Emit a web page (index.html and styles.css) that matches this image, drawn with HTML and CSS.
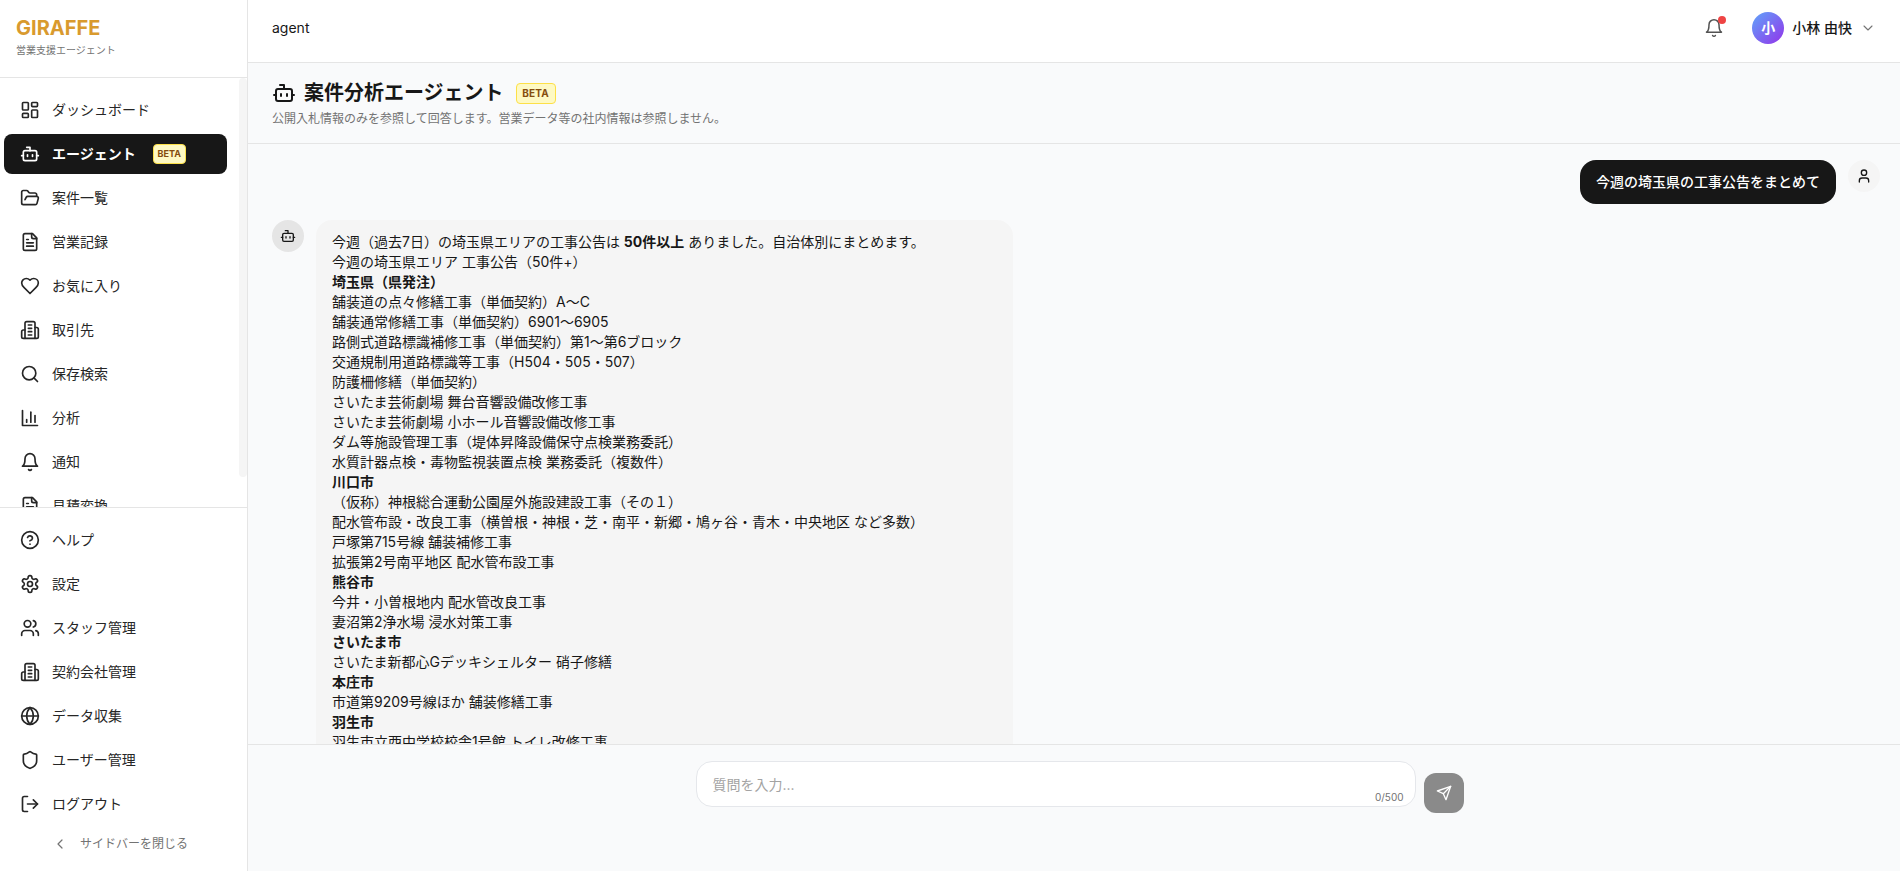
FILE: index.html
```html
<!DOCTYPE html>
<html lang="ja">
<head>
<meta charset="utf-8">
<title>agent</title>
<link rel="stylesheet" href="styles.css">
</head>
<body>
<svg class="sprite" aria-hidden="true">
  <symbol id="i-dash" viewBox="0 0 24 24"><rect width="7" height="9" x="3" y="3" rx="1"/><rect width="7" height="5" x="14" y="3" rx="1"/><rect width="7" height="9" x="14" y="12" rx="1"/><rect width="7" height="5" x="3" y="16" rx="1"/></symbol>
  <symbol id="i-bot" viewBox="0 0 24 24"><path d="M12 8V4H8"/><rect width="16" height="12" x="4" y="8" rx="2"/><path d="M2 14h2"/><path d="M20 14h2"/><path d="M15 13v2"/><path d="M9 13v2"/></symbol>
  <symbol id="i-folder" viewBox="0 0 24 24"><path d="m6 14 1.5-2.9A2 2 0 0 1 9.24 10H20a2 2 0 0 1 1.94 2.5l-1.54 6a2 2 0 0 1-1.95 1.5H4a2 2 0 0 1-2-2V5a2 2 0 0 1 2-2h3.9a2 2 0 0 1 1.69.9l.81 1.2a2 2 0 0 0 1.67.9H18a2 2 0 0 1 2 2v2"/></symbol>
  <symbol id="i-file" viewBox="0 0 24 24"><path d="M15 2H6a2 2 0 0 0-2 2v16a2 2 0 0 0 2 2h12a2 2 0 0 0 2-2V7Z"/><path d="M14 2v4a2 2 0 0 0 2 2h4"/><path d="M10 9H8"/><path d="M16 13H8"/><path d="M16 17H8"/></symbol>
  <symbol id="i-heart" viewBox="0 0 24 24"><path d="M19 14c1.49-1.46 3-3.21 3-5.5A5.5 5.5 0 0 0 16.5 3c-1.76 0-3 .5-4.5 2-1.5-1.5-2.74-2-4.5-2A5.5 5.5 0 0 0 2 8.5c0 2.3 1.5 4.05 3 5.5l7 7Z"/></symbol>
  <symbol id="i-building" viewBox="0 0 24 24"><path d="M6 22V4a2 2 0 0 1 2-2h8a2 2 0 0 1 2 2v18Z"/><path d="M6 12H4a2 2 0 0 0-2 2v6a2 2 0 0 0 2 2h2"/><path d="M18 9h2a2 2 0 0 1 2 2v9a2 2 0 0 1-2 2h-2"/><path d="M10 6h4"/><path d="M10 10h4"/><path d="M10 14h4"/><path d="M10 18h4"/></symbol>
  <symbol id="i-search" viewBox="0 0 24 24"><circle cx="11" cy="11" r="8"/><path d="m21 21-4.3-4.3"/></symbol>
  <symbol id="i-chart" viewBox="0 0 24 24"><path d="M3 3v18h18"/><path d="M18 17V9"/><path d="M13 17V5"/><path d="M8 17v-3"/></symbol>
  <symbol id="i-bell" viewBox="0 0 24 24"><path d="M6 8a6 6 0 0 1 12 0c0 7 3 9 3 9H3s3-2 3-9"/><path d="M10.3 21a1.94 1.94 0 0 0 3.4 0"/></symbol>
  <symbol id="i-help" viewBox="0 0 24 24"><circle cx="12" cy="12" r="10"/><path d="M9.09 9a3 3 0 0 1 5.83 1c0 2-3 3-3 3"/><path d="M12 17h.01"/></symbol>
  <symbol id="i-gear" viewBox="0 0 24 24"><path d="M12.22 2h-.44a2 2 0 0 0-2 2v.18a2 2 0 0 1-1 1.73l-.43.25a2 2 0 0 1-2 0l-.15-.08a2 2 0 0 0-2.73.73l-.22.38a2 2 0 0 0 .73 2.73l.15.1a2 2 0 0 1 1 1.72v.51a2 2 0 0 1-1 1.74l-.15.09a2 2 0 0 0-.73 2.73l.22.38a2 2 0 0 0 2.73.73l.15-.08a2 2 0 0 1 2 0l.43.25a2 2 0 0 1 1 1.73V20a2 2 0 0 0 2 2h.44a2 2 0 0 0 2-2v-.18a2 2 0 0 1 1-1.73l.43-.25a2 2 0 0 1 2 0l.15.08a2 2 0 0 0 2.73-.73l.22-.39a2 2 0 0 0-.73-2.73l-.15-.08a2 2 0 0 1-1-1.74v-.5a2 2 0 0 1 1-1.74l.15-.09a2 2 0 0 0 .73-2.73l-.22-.38a2 2 0 0 0-2.73-.73l-.15.08a2 2 0 0 1-2 0l-.43-.25a2 2 0 0 1-1-1.73V4a2 2 0 0 0-2-2z"/><circle cx="12" cy="12" r="3"/></symbol>
  <symbol id="i-users" viewBox="0 0 24 24"><path d="M16 21v-2a4 4 0 0 0-4-4H6a4 4 0 0 0-4 4v2"/><circle cx="9" cy="7" r="4"/><path d="M22 21v-2a4 4 0 0 0-3-3.87"/><path d="M16 3.13a4 4 0 0 1 0 7.75"/></symbol>
  <symbol id="i-globe" viewBox="0 0 24 24"><circle cx="12" cy="12" r="10"/><path d="M12 2a14.5 14.5 0 0 0 0 20 14.5 14.5 0 0 0 0-20"/><path d="M2 12h20"/></symbol>
  <symbol id="i-shield" viewBox="0 0 24 24"><path d="M20 13c0 5-3.5 7.5-7.66 8.95a1 1 0 0 1-.67-.01C7.5 20.5 4 18 4 13V6a1 1 0 0 1 1-1c2 0 4.5-1.2 6.24-2.72a1.17 1.17 0 0 1 1.52 0C14.51 3.81 17 5 19 5a1 1 0 0 1 1 1z"/></symbol>
  <symbol id="i-logout" viewBox="0 0 24 24"><path d="M9 21H5a2 2 0 0 1-2-2V5a2 2 0 0 1 2-2h4"/><path d="m16 17 5-5-5-5"/><path d="M21 12H9"/></symbol>
  <symbol id="i-left" viewBox="0 0 24 24"><path d="m15 18-6-6 6-6"/></symbol>
  <symbol id="i-down" viewBox="0 0 24 24"><path d="m6 9 6 6 6-6"/></symbol>
  <symbol id="i-user" viewBox="0 0 24 24"><path d="M19 21v-2a4 4 0 0 0-4-4H9a4 4 0 0 0-4 4v2"/><circle cx="12" cy="7" r="4"/></symbol>
  <symbol id="i-send" viewBox="0 0 24 24"><path d="m22 2-7 20-4-9-9-4Z"/><path d="M22 2 11 13"/></symbol>
</svg>

<div class="app">
  <aside class="sidebar">
    <div class="brand">
      <div class="brand-name">GIRAFFE</div>
      <div class="brand-sub">営業支援エージェント</div>
    </div>
    <div class="nav-wrap">
      <nav class="nav-scroll">
        <a class="nav-item"><svg class="icon"><use href="#i-dash"/></svg><span>ダッシュボード</span></a>
        <a class="nav-item is-active"><svg class="icon"><use href="#i-bot"/></svg><span>エージェント</span><span class="badge badge-nav">BETA</span></a>
        <a class="nav-item"><svg class="icon"><use href="#i-folder"/></svg><span>案件一覧</span></a>
        <a class="nav-item"><svg class="icon"><use href="#i-file"/></svg><span>営業記録</span></a>
        <a class="nav-item"><svg class="icon"><use href="#i-heart"/></svg><span>お気に入り</span></a>
        <a class="nav-item"><svg class="icon"><use href="#i-building"/></svg><span>取引先</span></a>
        <a class="nav-item"><svg class="icon"><use href="#i-search"/></svg><span>保存検索</span></a>
        <a class="nav-item"><svg class="icon"><use href="#i-chart"/></svg><span>分析</span></a>
        <a class="nav-item"><svg class="icon"><use href="#i-bell"/></svg><span>通知</span></a>
        <a class="nav-item"><svg class="icon"><use href="#i-file"/></svg><span>見積変換</span></a>
      </nav>
      <div class="nav-thumb"></div>
    </div>
    <nav class="nav-bottom">
      <a class="nav-item"><svg class="icon"><use href="#i-help"/></svg><span>ヘルプ</span></a>
      <a class="nav-item"><svg class="icon"><use href="#i-gear"/></svg><span>設定</span></a>
      <a class="nav-item"><svg class="icon"><use href="#i-users"/></svg><span>スタッフ管理</span></a>
      <a class="nav-item"><svg class="icon"><use href="#i-building"/></svg><span>契約会社管理</span></a>
      <a class="nav-item"><svg class="icon"><use href="#i-globe"/></svg><span>データ収集</span></a>
      <a class="nav-item"><svg class="icon"><use href="#i-shield"/></svg><span>ユーザー管理</span></a>
      <a class="nav-item"><svg class="icon"><use href="#i-logout"/></svg><span>ログアウト</span></a>
      <a class="collapse"><svg class="icon-sm"><use href="#i-left"/></svg><span>サイドバーを閉じる</span></a>
    </nav>
  </aside>

  <div class="main">
    <header class="topbar">
      <div class="crumb">agent</div>
      <div class="top-actions">
        <div class="bell"><svg class="icon-bell"><use href="#i-bell"/></svg><span class="bell-dot"></span></div>
        <div class="user-menu">
          <span class="user-avatar">小</span>
          <span class="user-name">小林 由快</span>
          <svg class="icon-chev"><use href="#i-down"/></svg>
        </div>
      </div>
    </header>

    <section class="page-head">
      <div class="title-row">
        <svg class="icon-title"><use href="#i-bot"/></svg>
        <h1 class="title">案件分析エージェント</h1>
        <span class="badge badge-title">BETA</span>
      </div>
      <p class="subtitle">公開入札情報のみを参照して回答します。営業データ等の社内情報は参照しません。</p>
    </section>

    <section class="chat">
      <div class="msg msg-user">
        <div class="bubble-user">今週の埼玉県の工事公告をまとめて</div>
        <div class="avatar"><svg class="icon-msg"><use href="#i-user"/></svg></div>
      </div>
      <div class="msg">
        <div class="avatar avatar-bot"><svg class="icon-msg"><use href="#i-bot"/></svg></div>
        <div class="bubble-bot">
          <p>今週（過去7日）の埼玉県エリアの工事公告は <b>50件以上</b> ありました。自治体別にまとめます。</p>
          <p>今週の埼玉県エリア 工事公告（50件+）</p>
          <p><b>埼玉県（県発注）</b></p>
          <p>舗装道の点々修繕工事（単価契約）A〜C</p>
          <p>舗装通常修繕工事（単価契約）6901〜6905</p>
          <p>路側式道路標識補修工事（単価契約）第1〜第6ブロック</p>
          <p>交通規制用道路標識等工事（H504・505・507）</p>
          <p>防護柵修繕（単価契約）</p>
          <p>さいたま芸術劇場 舞台音響設備改修工事</p>
          <p>さいたま芸術劇場 小ホール音響設備改修工事</p>
          <p>ダム等施設管理工事（堤体昇降設備保守点検業務委託）</p>
          <p>水質計器点検・毒物監視装置点検 業務委託（複数件）</p>
          <p><b>川口市</b></p>
          <p>（仮称）神根総合運動公園屋外施設建設工事（その１）</p>
          <p>配水管布設・改良工事（横曽根・神根・芝・南平・新郷・鳩ヶ谷・青木・中央地区 など多数）</p>
          <p>戸塚第715号線 舗装補修工事</p>
          <p>拡張第2号南平地区 配水管布設工事</p>
          <p><b>熊谷市</b></p>
          <p>今井・小曽根地内 配水管改良工事</p>
          <p>妻沼第2浄水場 浸水対策工事</p>
          <p><b>さいたま市</b></p>
          <p>さいたま新都心Gデッキシェルター 硝子修繕</p>
          <p><b>本庄市</b></p>
          <p>市道第9209号線ほか 舗装修繕工事</p>
          <p><b>羽生市</b></p>
          <p>羽生市立西中学校校舎1号館 トイレ改修工事</p>
        </div>
      </div>
    </section>

    <footer class="composer">
      <div class="composer-inner">
        <div class="input-wrap">
          <textarea class="input" rows="1" placeholder="質問を入力..."></textarea>
          <span class="counter">0/500</span>
        </div>
        <button class="send" type="button"><svg class="icon-send"><use href="#i-send"/></svg></button>
      </div>
    </footer>
  </div>
</div>
</body>
</html>
```
FILE: styles.css
```css
* { box-sizing: border-box; }
html, body { height: 100%; }
body {
  margin: 0;
  overflow: hidden;
  background: #f9fafb;
  color: #171717;
  font-family: Inter, "Noto Sans CJK JP", sans-serif;
  font-size: 14px;
  line-height: 20px;
}
.sprite { display: none; }
svg { fill: none; stroke: currentColor; stroke-width: 2; stroke-linecap: round; stroke-linejoin: round; flex: none; }
p, h1 { margin: 0; }

.app { display: flex; height: 871px; }

/* Sidebar */
.sidebar {
  width: 248px;
  flex: none;
  display: flex;
  flex-direction: column;
  background: #fff;
  border-right: 1px solid #e5e5e5;
}
.brand { height: 78px; flex: none; padding: 17px 16px 0; border-bottom: 1px solid #e5e5e5; }
.brand-name { color: #d99a2e; font-size: 20px; line-height: 22px; font-weight: 700; }
.brand-sub { color: #737373; font-size: 10px; line-height: 14px; margin-top: 4px; }
.nav-wrap { position: relative; height: 429px; flex: none; }
.nav-scroll {
  height: 100%;
  overflow-y: auto;
  scrollbar-width: none;
  padding: 12px 20px 12px 4px;
}
.nav-thumb {
  position: absolute;
  top: 0;
  right: 0;
  width: 8px;
  height: 399px;
  background: #f5f5f5;
  border-radius: 4px;
}
.nav-bottom { flex: 1; padding: 12px 20px 0 4px; border-top: 1px solid #e5e5e5; }
.nav-item {
  display: flex;
  align-items: center;
  gap: 12px;
  height: 40px;
  margin-bottom: 4px;
  padding: 0 16px;
  border-radius: 8px;
  color: #262626;
  font-size: 14px;
  white-space: nowrap;
}
.nav-item.is-active { background: #171717; color: #fff; font-weight: 700; }
.icon { width: 20px; height: 20px; }
.collapse {
  display: flex;
  align-items: center;
  gap: 12px;
  padding-left: 48px;
  margin-top: 2px;
  height: 32px;
  color: #737373;
  font-size: 12px;
}
.icon-sm { width: 16px; height: 16px; stroke-width: 1.8; }

.badge {
  display: inline-flex;
  align-items: center;
  justify-content: center;
  background: #fef9c3;
  border: 1px solid #fde047;
  border-radius: 4px;
  color: #854d0e;
  font-weight: 700;
}
.badge-nav { width: 33px; height: 20px; margin-left: 5px; font-size: 9px; }
.badge-title { width: 40px; height: 21px; font-size: 10px; letter-spacing: 0.2px; }

/* Main */
.main { flex: 1; min-width: 0; display: flex; flex-direction: column; }
.topbar {
  height: 63px;
  flex: none;
  display: flex;
  align-items: center;
  justify-content: space-between;
  padding: 0 24px 6px;
  background: #fff;
  border-bottom: 1px solid #e5e5e5;
}
.crumb { color: #171717; }
.top-actions { display: flex; align-items: center; gap: 28px; }
.bell { position: relative; width: 20px; height: 20px; color: #525252; }
.icon-bell { display: block; width: 20px; height: 20px; stroke-width: 1.8; }
.bell-dot { position: absolute; top: -2px; right: -2px; width: 8px; height: 8px; border-radius: 50%; background: #ef4444; }
.user-menu { display: flex; align-items: center; }
.user-avatar {
  width: 32px; height: 32px;
  border-radius: 50%;
  display: flex; align-items: center; justify-content: center;
  background: linear-gradient(135deg, #60a5fa, #9333ea);
  color: #fff;
  font-size: 14px;
  font-weight: 700;
}
.user-name { margin-left: 8px; font-weight: 500; color: #171717; }
.icon-chev { width: 16px; height: 16px; margin-left: 8px; color: #737373; stroke-width: 1.6; }

.page-head {
  height: 81px;
  flex: none;
  padding: 16px 24px;
  border-bottom: 1px solid #e5e5e5;
}
.title-row { display: flex; align-items: center; height: 28px; }
.icon-title { width: 24px; height: 24px; margin-right: 8px; }
.title { font-size: 20px; line-height: 28px; font-weight: 700; margin-right: 12px; }
.subtitle { margin-top: 4px; color: #737373; font-size: 12px; line-height: 16px; }

.chat {
  flex: 1;
  min-height: 0;
  overflow: hidden;
  padding: 16px 20px 16px 24px;
  display: flex;
  flex-direction: column;
  gap: 16px;
}
.msg { display: flex; align-items: flex-start; gap: 12px; flex: none; }
.msg-user { justify-content: flex-end; }
.avatar {
  width: 32px; height: 32px;
  border-radius: 50%;
  background: #f5f5f5;
  display: flex; align-items: center; justify-content: center;
  color: #171717;
  flex: none;
}
.avatar-bot { background: #e5e5e5; }
.icon-msg { width: 16px; height: 16px; }
.bubble-user {
  padding: 12px 16px;
  border-radius: 16px;
  background: #171717;
  color: #fff;
  font-weight: 500;
}
.bubble-bot {
  width: 697px;
  padding: 12px 16px;
  border-radius: 16px;
  background: #f5f5f5;
  color: #171717;
}
.bubble-bot b { font-weight: 700; }

.composer {
  height: 127px;
  flex: none;
  padding: 16px 0 0 11px;
  border-top: 1px solid #e5e5e5;
  display: flex;
  justify-content: center;
}
.composer-inner { width: 768px; display: flex; align-items: flex-start; gap: 8px; height: 56px; }
.input-wrap { position: relative; flex: 1; height: 46px; }
.input {
  display: block;
  width: 100%;
  height: 46px;
  padding: 13px 16px 11px;
  border: 1px solid #e5e7eb;
  border-radius: 16px;
  background: #fff;
  font: inherit;
  color: #171717;
  resize: none;
  outline: none;
}
.input::placeholder { color: #a3a3a3; }
.counter { position: absolute; right: 12px; bottom: 3px; color: #737373; font-size: 10px; line-height: 14px; font-weight: 400; }
.send {
  width: 40px; height: 40px;
  margin-top: 12px;
  border: 0;
  border-radius: 12px;
  background: #8a8a8a;
  color: #fff;
  display: flex; align-items: center; justify-content: center;
  padding: 0;
}
.icon-send { width: 16px; height: 16px; }
```
